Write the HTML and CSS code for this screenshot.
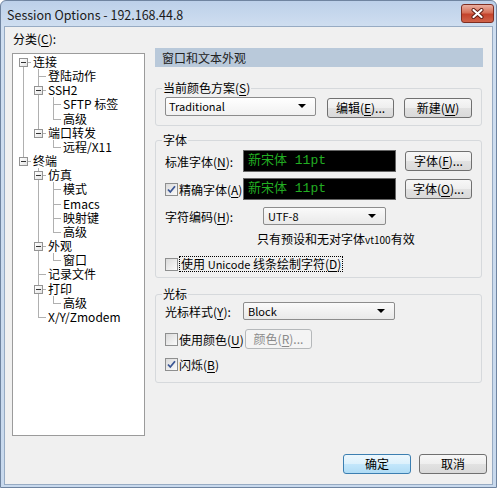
FILE: index.html
```html
<!DOCTYPE html>
<html lang="zh-CN">
<head>
    <meta charset="UTF-8">
    <title>Session Options</title>
    <link rel="stylesheet" href="styles.css">
</head>
<body>
    <div class="window">
        <div class="titlebar">
            <span class="title">Session Options - 192.168.44.8</span>
            <button class="close">
                <svg width="15" height="11" viewBox="0 0 15 11">
                    <path d="M3.5 2 L11.5 9 M11.5 2 L3.5 9" stroke="#5b1a10" stroke-width="4" stroke-linecap="round"/>
                    <path d="M3.5 2 L11.5 9 M11.5 2 L3.5 9" stroke="#fff" stroke-width="2.2" stroke-linecap="round"/>
                </svg>
            </button>
        </div>

        <div class="client">
            <div class="main">
                <!-- 左侧分类树 -->
                <div class="category">
                    <div class="cat-label">分类(<u>C</u>):</div>
                    <ul class="tree">
                        <li><i class="exp"></i><span>连接</span>
                            <ul>
                                <li><span>登陆动作</span></li>
                                <li><i class="exp"></i><span>SSH2</span>
                                    <ul>
                                        <li><span>SFTP 标签</span></li>
                                        <li><span>高级</span></li>
                                    </ul>
                                </li>
                                <li><i class="exp"></i><span>端口转发</span>
                                    <ul>
                                        <li><span>远程/X11</span></li>
                                    </ul>
                                </li>
                            </ul>
                        </li>
                        <li><i class="exp"></i><span>终端</span>
                            <ul>
                                <li><i class="exp"></i><span>仿真</span>
                                    <ul>
                                        <li><span>模式</span></li>
                                        <li><span>Emacs</span></li>
                                        <li><span>映射键</span></li>
                                        <li><span>高级</span></li>
                                    </ul>
                                </li>
                                <li><i class="exp"></i><span>外观</span>
                                    <ul>
                                        <li><span>窗口</span></li>
                                    </ul>
                                </li>
                                <li><span>记录文件</span></li>
                                <li><i class="exp"></i><span>打印</span>
                                    <ul>
                                        <li><span>高级</span></li>
                                    </ul>
                                </li>
                                <li><span>X/Y/Zmodem</span></li>
                            </ul>
                        </li>
                    </ul>
                </div>

                <!-- 右侧设置面板 -->
                <div class="panel">
                    <div class="panel-head">窗口和文本外观</div>

                    <fieldset class="group scheme">
                        <legend>当前颜色方案(<u>S</u>)</legend>
                        <div class="row scheme-row">
                            <div class="combo scheme-combo">Traditional</div>
                            <button class="btn edit-btn">编辑(<u>E</u>)...</button>
                            <button class="btn new-btn">新建(<u>W</u>)</button>
                        </div>
                    </fieldset>

                    <fieldset class="group fonts">
                        <legend>字体</legend>
                        <div class="row font-row">
                            <span class="field-label">标准字体(<u>N</u>):</span>
                            <div class="font-box">新宋体 11pt</div>
                            <button class="btn font-btn">字体(<u>F</u>)...</button>
                        </div>
                        <div class="row font-row second">
                            <span class="field-label">
                                <span class="cb"><svg width="11" height="11" viewBox="0 0 11 11"><path d="M2 5.5 L4.3 8 L9 2.3" fill="none" stroke="#3b5694" stroke-width="1.8"/></svg></span>精确字体(<u>A</u>)
                            </span>
                            <div class="font-box">新宋体 11pt</div>
                            <button class="btn font-btn">字体(<u>O</u>)...</button>
                        </div>
                        <div class="row encoding-row">
                            <span class="field-label wide">字符编码(<u>H</u>):</span>
                            <div class="combo encoding-combo">UTF-8</div>
                        </div>
                        <div class="note">只有预设和无对字体<small>vt100</small>有效</div>
                        <div class="row check-row unicode-row">
                            <span class="cb"></span>
                            <span class="focus">使用 <small>Unicode</small> 线条绘制字符(<u>D</u>)</span>
                        </div>
                    </fieldset>

                    <fieldset class="group cursor">
                        <legend>光标</legend>
                        <div class="row cursor-row">
                            <span class="field-label">光标样式(<u>Y</u>):</span>
                            <div class="combo cursor-combo">Block</div>
                        </div>
                        <div class="row color-row">
                            <span class="field-label color-label"><span class="cb"></span>使用颜色(<u>U</u>)</span>
                            <button class="btn disabled">颜色(<u>R</u>)...</button>
                        </div>
                        <div class="row check-row blink-row">
                            <span class="cb"><svg width="11" height="11" viewBox="0 0 11 11"><path d="M2 5.5 L4.3 8 L9 2.3" fill="none" stroke="#3b5694" stroke-width="1.8"/></svg></span>
                            <span>闪烁(<u>B</u>)</span>
                        </div>
                    </fieldset>
                </div>
            </div>

            <div class="footer">
                <button class="btn default">确定</button>
                <button class="btn">取消</button>
            </div>
        </div>
    </div>
</body>
</html>
```

FILE: styles.css
```css
/* 对话框基础 */
* {
    box-sizing: border-box;
}

body {
    margin: 0;
    background-color: #fff;
    font-family: "Noto Sans CJK SC", sans-serif;
    font-size: 12px;
    color: #000;
}

u {
    text-decoration-thickness: 1px;
    text-underline-offset: 2px;
}

small {
    font-size: 11px;
}

.window {
    width: 497px;
    height: 488px;
    display: flex;
    flex-direction: column;
    padding: 0 3px 2px;
    border: 1px solid #6f84a0;
    border-radius: 6px 6px 0 0;
    background: linear-gradient(#bcd0e9, #cfdef0 25px, #c8d9ed);
}

.titlebar {
    height: 25px;
    display: flex;
    justify-content: space-between;
    align-items: flex-start;
}

.title {
    padding-left: 3px;
    line-height: 27px;
    font-size: 12.5px;
    color: #1a1a1a;
}

.close {
    width: 33px;
    height: 19px;
    margin: 3px -1px 0 0;
    padding: 0;
    display: flex;
    align-items: center;
    justify-content: center;
    border: 1px solid #7e2e22;
    border-radius: 3px;
    background: linear-gradient(#eab0a2, #d67058 45%, #c4432c 55%, #d0634a);
}

.client {
    flex: 1;
    display: flex;
    flex-direction: column;
    padding: 5px 0 0 7px;
    border: 1px solid #97abc3;
    background-color: #f0f0f0;
}

.main {
    display: flex;
}

/* 分类树 */
.category {
    width: 133px;
}

.cat-label {
    line-height: 14px;
    padding-left: 1px;
}

.tree,
.tree ul {
    list-style: none;
    margin: 0;
    padding: 0;
}

.tree {
    margin-top: 7px;
    height: 383px;
    padding-top: 1px;
    background-color: #fff;
    border: 1px solid #9b9b9b;
}

.tree ul {
    margin-left: -5px;
}

.tree li {
    position: relative;
    padding-left: 20px;
    line-height: 14.17px;
    white-space: nowrap;
}

.tree li span {
    display: block;
    height: 14.17px;
}

/* 树的连接线 */
.tree li::before {
    content: "";
    position: absolute;
    left: 10px;
    top: 0;
    bottom: 0;
    border-left: 1px solid #b0b0b0;
}

.tree li:last-child::before {
    bottom: auto;
    height: 7px;
}

.tree > li:first-child::before {
    top: 7px;
}

.tree li::after {
    content: "";
    position: absolute;
    left: 10px;
    top: 7px;
    width: 8px;
    border-top: 1px solid #b0b0b0;
}

.exp {
    position: absolute;
    left: 6px;
    top: 3px;
    width: 9px;
    height: 9px;
    z-index: 1;
    border: 1px solid #939393;
    background: linear-gradient(135deg, #fff, #e4e4e4);
}

.exp::before {
    content: "";
    position: absolute;
    left: 1px;
    top: 3px;
    width: 5px;
    height: 1px;
    background-color: #333;
}

/* 右侧面板 */
.panel {
    width: 328px;
    margin: 16px 0 0 10px;
}

.panel-head {
    height: 19px;
    line-height: 19px;
    padding-left: 7px;
    background-color: #b9c9da;
    color: #222;
}

.group {
    min-width: 0;
    margin: 14px 1px 0 0;
    padding: 0 9px 7px;
    border: 1px solid #d6d9dc;
    border-radius: 3px;
}

.group legend {
    margin-left: -3px;
    padding: 0 1px;
    line-height: 14px;
}

.fonts {
    margin-top: 7px;
    padding-bottom: 5px;
}

.cursor {
    margin-top: 9px;
    padding-bottom: 10px;
}

.row {
    display: flex;
    align-items: center;
}

.field-label {
    width: 78px;
    display: flex;
    align-items: center;
    white-space: nowrap;
}

.field-label.wide {
    width: 98px;
}

.color-label {
    width: 80px;
}

/* 按钮 */
.btn {
    height: 20px;
    padding: 0;
    font: inherit;
    line-height: 18px;
    color: #000;
    text-align: center;
    border: 1px solid #707070;
    border-radius: 3px;
    background: linear-gradient(#f7f7f7, #eeeeee 50%, #e2e2e2 50%, #d9d9d9);
}

.btn.default {
    border-color: #3c7fb1;
    background: linear-gradient(#edf7fd, #dcf1fc 50%, #c4e7fb 50%, #b0dcf5);
}

.btn.disabled {
    width: 67px;
    color: #8a8a8a;
    border-color: #b5b8ba;
    background: #f4f4f4;
}

/* 下拉框 */
.combo {
    position: relative;
    height: 18px;
    line-height: 16px;
    padding-left: 4px;
    font-size: 11px;
    border: 1px solid #8c8c8c;
    border-radius: 2px;
    background: linear-gradient(#fafafa, #e9e9e9);
}

.combo::after {
    content: "";
    position: absolute;
    right: 9px;
    top: 6px;
    border: 4px solid transparent;
    border-top-color: #000;
    border-bottom: 0;
}

.scheme-row {
    margin-top: 2px;
    align-items: flex-start;
}

.scheme-combo {
    width: 151px;
    height: 19px;
    line-height: 17px;
    padding-left: 3px;
    background: linear-gradient(#fff, #f1f1f1);
}

.edit-btn {
    width: 67px;
    margin: 1px 0 0 11px;
}

.new-btn {
    width: 68px;
    margin: 1px 0 0 10px;
}

/* 字体 */
.font-row {
    height: 22px;
    margin-top: 3px;
}

.font-row.second {
    margin-top: 6px;
}

.font-box {
    width: 153px;
    height: 22px;
    line-height: 19px;
    padding-left: 4px;
    font-family: "Liberation Mono", "Noto Sans CJK SC", monospace;
    font-size: 13px;
    color: #22ad22;
    background-color: #000;
    border: 1px solid #666;
}

.font-btn {
    width: 67px;
    margin-left: 9px;
}

.cb {
    width: 13px;
    height: 13px;
    margin-right: 1px;
    flex: none;
    display: inline-flex;
    align-items: center;
    justify-content: center;
    border: 1px solid #8e8f8f;
    background: linear-gradient(135deg, #dadada, #fbfbfb);
}

.encoding-row {
    margin-top: 7px;
}

.encoding-combo {
    width: 123px;
}

.note {
    margin-top: 6px;
    padding-left: 92px;
    line-height: 16px;
}

.note small {
    font-size: 10px;
}

.check-row {
    height: 16px;
}

.unicode-row {
    margin-top: 8px;
}

.focus {
    padding: 0 1px;
    line-height: 14px;
    border: 1px dotted #000;
}

/* 光标 */
.cursor-row {
    margin-top: 1px;
}

.cursor-combo {
    width: 152px;
}

.color-row {
    height: 20px;
    margin-top: 9px;
}

.blink-row {
    margin-top: 7px;
}

/* 底部按钮 */
.footer {
    margin-top: auto;
    display: flex;
    justify-content: flex-end;
    gap: 8px;
    padding: 0 5px 10px 0;
}

.footer .btn {
    width: 68px;
}
```
